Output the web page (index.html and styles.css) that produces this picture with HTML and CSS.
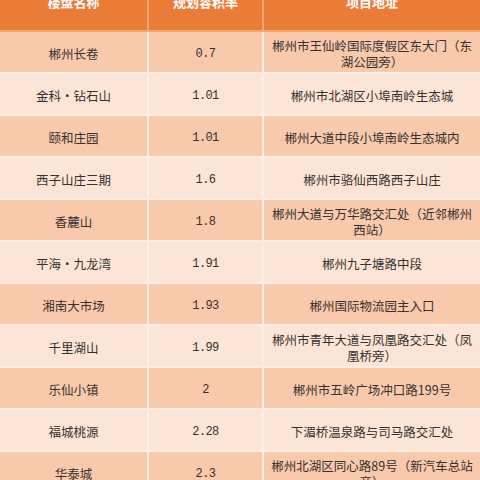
FILE: index.html
```html
<!DOCTYPE html>
<html lang="zh-CN">
<head>
<meta charset="utf-8">
<link rel="stylesheet" href="styles.css">
</head>
<body>
<div class="frame">
<table class="tbl">
  <colgroup><col class="c1"><col class="c2"><col class="c3"></colgroup>
  <thead>
    <tr><th>楼盘名称</th><th>规划容积率</th><th>项目地址</th></tr>
  </thead>
  <tbody>
    <tr class="dark"><td>郴州长卷</td><td class="num">0.7</td><td>郴州市王仙岭国际度假区东大门（东湖公园旁）</td></tr>
    <tr class="light"><td>金科·钻石山</td><td class="num">1.01</td><td>郴州市北湖区小埠南岭生态城</td></tr>
    <tr class="dark"><td>颐和庄园</td><td class="num">1.01</td><td>郴州大道中段小埠南岭生态城内</td></tr>
    <tr class="light"><td>西子山庄三期</td><td class="num">1.6</td><td>郴州市骆仙西路西子山庄</td></tr>
    <tr class="dark"><td>香麓山</td><td class="num">1.8</td><td>郴州大道与万华路交汇处（近邻郴州西站）</td></tr>
    <tr class="light"><td>平海·九龙湾</td><td class="num">1.91</td><td>郴州九子塘路中段</td></tr>
    <tr class="dark"><td>湘南大市场</td><td class="num">1.93</td><td>郴州国际物流园主入口</td></tr>
    <tr class="light"><td>千里湖山</td><td class="num">1.99</td><td>郴州市青年大道与凤凰路交汇处（凤凰桥旁）</td></tr>
    <tr class="dark"><td>乐仙小镇</td><td class="num">2</td><td>郴州市五岭广场冲口路199号</td></tr>
    <tr class="light"><td>福城桃源</td><td class="num">2.28</td><td>下湄桥温泉路与司马路交汇处</td></tr>
    <tr class="dark"><td>华泰城</td><td class="num">2.3</td><td>郴州北湖区同心路89号（新汽车总站旁）</td></tr>
  </tbody>
</table>
</div>
</body>
</html>
```
FILE: styles.css
```css
html, body {
  margin: 0;
  padding: 0;
  background: #fce6d9;
}
.frame {
  width: 480px;
  height: 480px;
  overflow: hidden;
}
.tbl {
  width: 480px;
  border-collapse: collapse;
  table-layout: fixed;
  margin-top: -28px;
  font-family: "Noto Sans CJK SC", "Noto Sans", sans-serif;
  font-size: 12.5px;
  color: #363130;
}
.c1 { width: 148px; }
.c2 { width: 115px; }
.c3 { width: 217px; }
.tbl th {
  background: #ea7c38;
  color: #ffffff;
  font-weight: bold;
  font-size: 13px;
  height: 58px;
  padding: 0;
  border: 2px solid #f3a673;
  border-top: none;
  vertical-align: middle;
}
.tbl td {
  height: 36px;
  padding: 4px 6px 0 6px;
  text-align: center;
  vertical-align: middle;
  line-height: 16px;
  border: 2px solid #fdefe5;
}
.tbl th:first-child, .tbl td:first-child { border-left: none; }
.tbl th:last-child, .tbl td:last-child { border-right: none; }
.dark td { background: #f9c9ab; }
.light td { background: #fce5d6; }
.num {
  font-family: "Liberation Mono", "DejaVu Sans Mono", monospace;
  font-size: 12px;
  letter-spacing: -0.6px;
}
```
